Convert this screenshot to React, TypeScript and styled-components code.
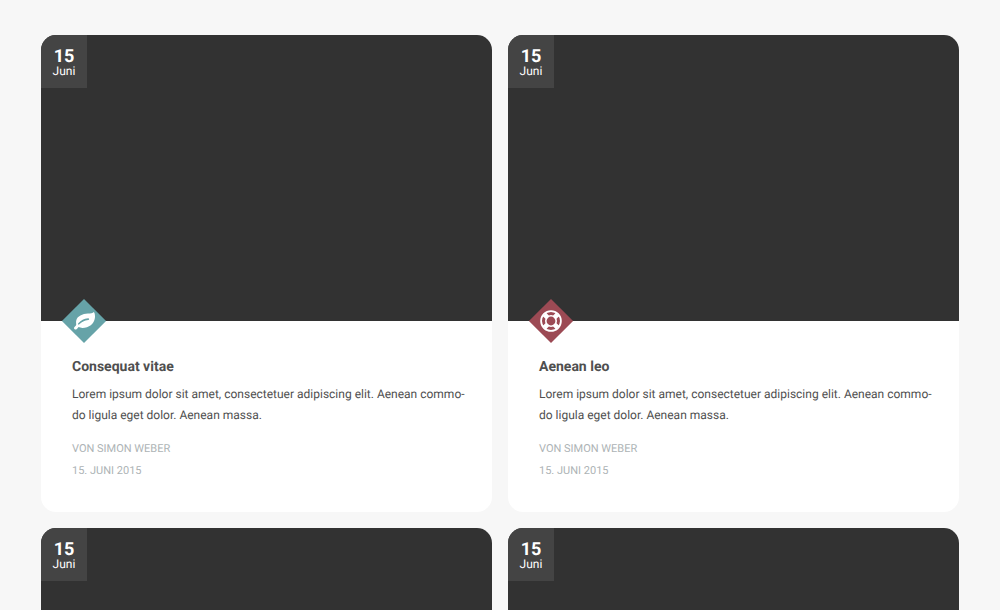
import React from "react";
import styled, { createGlobalStyle } from "styled-components";

const GlobalStyle = createGlobalStyle`
  * { box-sizing: border-box; }
  body {
    margin: 0;
    background: #f7f7f7;
    font-family: Roboto, sans-serif;
    color: #4f4f4f;
    text-rendering: geometricPrecision;
    -webkit-font-smoothing: antialiased;
  }
`;

const Grid = styled.main`
  display: grid;
  grid-template-columns: repeat(2, minmax(0, 1fr));
  gap: 16px;
  padding: 35px 41px;
`;

const Card = styled.article`
  background: #fff;
  border-radius: 15px;
  overflow: hidden;
`;

const Cover = styled.div`
  position: relative;
  height: 286px;
  background: #323232;
`;

const DateBadge = styled.time`
  display: flex;
  flex-direction: column;
  align-items: center;
  width: 46px;
  height: 53px;
  padding-top: 13px;
  background: #444;
  color: #fff;
  font-size: 12px;
  line-height: 12px;
`;

const Day = styled.strong`
  font-size: 18px;
  line-height: 17px;
  font-weight: 700;
`;

const Diamond = styled.span<{ $color: string }>`
  position: absolute;
  left: 20px;
  bottom: -23px;
  display: grid;
  place-items: center;
  width: 46px;
  height: 46px;
  background: ${(p) => p.$color};
  clip-path: polygon(50% 2%, 98% 50%, 50% 98%, 2% 50%);
  color: #fff;

  svg {
    width: 22px;
    height: 22px;
  }
`;

const Body = styled.div`
  padding: 34px 24px 30px 31px;
`;

const Title = styled.h2`
  margin: 0 0 4px;
  font-size: 14px;
  line-height: 25px;
  font-weight: 700;
`;

const Text = styled.p`
  margin: 0 0 12px;
  font-size: 12px;
  line-height: 21px;
`;

const Meta = styled.p`
  margin: 0;
  color: #adb3b5;
  font-size: 11px;
  line-height: 22px;
  text-transform: uppercase;
`;

function LeafIcon() {
  return (
    <svg viewBox="0 0 22 22" fill="currentColor" aria-hidden="true">
      <path
        fillRule="evenodd"
        d="M20.8 2.1C19.9 3.3 17.5 3.5 14.8 3.6C9.6 3.8 4.2 6.1 3.2 10.8C2.9 12.3 3.2 13.7 3.2 14.9C2.9 16 1 16.9 1 17.9C1 18.8 2 19.5 2.8 19.5C4.1 19.5 4.7 17.8 5.6 17.1C6.6 17.4 7.9 18 9.5 18C15.9 18 21.2 13.8 21.9 8C22.2 5.4 21.8 3.1 20.8 2.1ZM6 14.6C5.2 14.9 4.7 13.9 5.3 13.3C8.3 10.3 10.7 8.6 15.1 8.3C16.4 8.2 16.5 9.9 15.3 10C11.3 10.3 8.9 12 6 14.6Z"
      />
    </svg>
  );
}

function LifeRingIcon() {
  return (
    <svg viewBox="0 0 22 22" fill="none" stroke="currentColor" aria-hidden="true">
      <circle cx="11" cy="11" r="9.9" strokeWidth="1.8" />
      <circle cx="11" cy="11" r="5.2" strokeWidth="1.6" />
      <path
        strokeWidth="4.6"
        d="M4.5 4.5 7.4 7.4M17.5 4.5 14.6 7.4M4.5 17.5 7.4 14.6M17.5 17.5 14.6 14.6"
      />
    </svg>
  );
}

const posts = [
  { title: "Consequat vitae", color: "#66a3a8", Icon: LeafIcon },
  { title: "Aenean leo", color: "#9c4a54", Icon: LifeRingIcon },
  { title: "Consequat vitae", color: "#66a3a8", Icon: LeafIcon },
  { title: "Aenean leo", color: "#9c4a54", Icon: LifeRingIcon },
];

export default function App() {
  return (
    <>
      <GlobalStyle />
      <Grid>
        {posts.map(({ title, color, Icon }, i) => (
          <Card key={i}>
            <Cover>
              <DateBadge dateTime="2015-06-15">
                <Day>15</Day>
                Juni
              </DateBadge>
              <Diamond $color={color}>
                <Icon />
              </Diamond>
            </Cover>
            <Body>
              <Title>{title}</Title>
              <Text>
                Lorem ipsum dolor sit amet, consectetuer adipiscing elit. Aenean com&shy;mo&shy;do
                ligula eget dolor. Aenean massa.
              </Text>
              <Meta>Von Simon Weber</Meta>
              <Meta>15. Juni 2015</Meta>
            </Body>
          </Card>
        ))}
      </Grid>
    </>
  );
}
